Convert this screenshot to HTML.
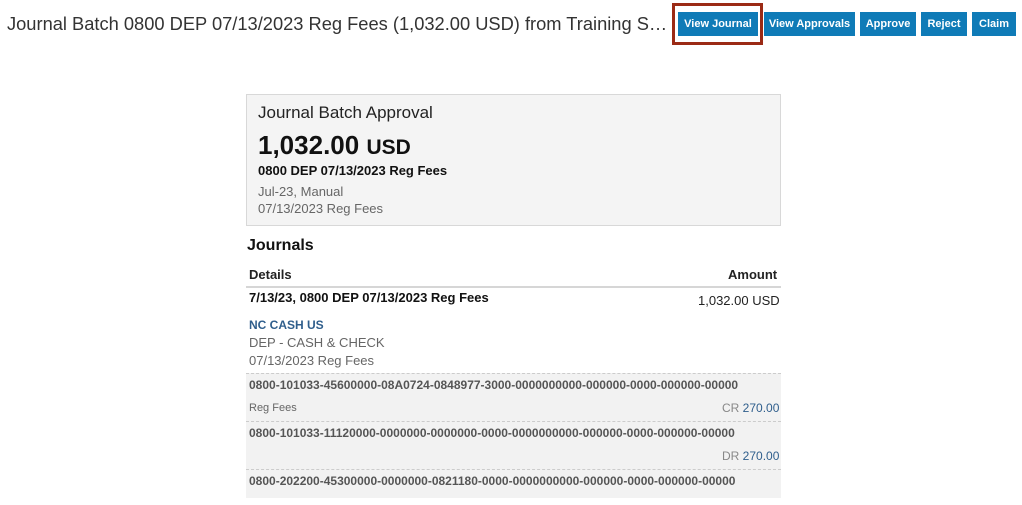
<!DOCTYPE html>
<html><head><style>
body{margin:0;width:1022px;height:505px;background:#fff;font-family:"Liberation Sans",sans-serif;position:relative;overflow:hidden}
.a{position:absolute;white-space:nowrap}
.btn{position:absolute;top:12px;height:24px;background:#0f7bb7;color:#fff;font-size:11px;font-weight:bold;line-height:24px;text-align:center}
.b{font-weight:bold}
.g{color:#666}
.acct{position:absolute;left:246px;width:535px;background:#f2f2f2;border-top:1px dashed #ccc}
</style></head><body>
<div class="a" style="left:7px;top:13px;font-size:18.3px;color:#333">Journal Batch 0800 DEP 07/13/2023 Reg Fees (1,032.00 USD) from Training S…</div>
<div class="a" style="left:672px;top:3px;width:85px;height:36px;border:3px solid #9b2a15"></div>
<div class="btn" style="left:678px;width:80px">View Journal</div>
<div class="btn" style="left:764px;width:91px">View Approvals</div>
<div class="btn" style="left:860px;width:56px">Approve</div>
<div class="btn" style="left:921px;width:46px">Reject</div>
<div class="btn" style="left:972px;width:44px">Claim</div>

<div class="a" style="left:246px;top:94px;width:533px;height:130px;background:#f4f4f4;border:1px solid #d8d8d8"></div>
<div class="a" style="left:258px;top:103px;font-size:17px;color:#222">Journal Batch Approval</div>
<div class="a b" style="left:258px;top:130px;font-size:26px;color:#111">1,032.00 <span style="font-size:21px">USD</span></div>
<div class="a b" style="left:258px;top:163px;font-size:13px;color:#111">0800 DEP 07/13/2023 Reg Fees</div>
<div class="a g" style="left:258px;top:184px;font-size:13px">Jul-23, Manual</div>
<div class="a g" style="left:258px;top:201px;font-size:13px">07/13/2023 Reg Fees</div>

<div class="a b" style="left:247px;top:237px;font-size:16px;color:#111">Journals</div>
<div class="a b" style="left:249px;top:267px;font-size:13px;color:#222">Details</div>
<div class="a b" style="left:728px;top:267px;font-size:13px;color:#222">Amount</div>
<div class="a" style="left:246px;top:286px;width:535px;height:2px;background:#d6d6d6"></div>
<div class="a b" style="left:249px;top:290px;font-size:13px;color:#111">7/13/23, 0800 DEP 07/13/2023 Reg Fees</div>
<div class="a" style="left:698px;top:293px;font-size:13px;color:#222">1,032.00 USD</div>
<div class="a b" style="left:249px;top:318px;font-size:12px;color:#2f5e8c">NC CASH US</div>
<div class="a g" style="left:249px;top:335px;font-size:13px">DEP - CASH &amp; CHECK</div>
<div class="a g" style="left:249px;top:353px;font-size:13px">07/13/2023 Reg Fees</div>

<div class="acct" style="top:373px;height:47px"></div>
<div class="acct" style="top:421px;height:47px"></div>
<div class="acct" style="top:469px;height:28px"></div>
<div class="a b" style="left:249px;top:378px;font-size:12px;color:#555">0800-101033-45600000-08A0724-0848977-3000-0000000000-000000-0000-000000-00000</div>
<div class="a g" style="left:249px;top:402px;font-size:11px">Reg Fees</div>
<div class="a" style="left:722px;top:401px;font-size:12px;color:#888">CR <span style="color:#2f5e8c">270.00</span></div>
<div class="a b" style="left:249px;top:426px;font-size:12px;color:#555">0800-101033-11120000-0000000-0000000-0000-0000000000-000000-0000-000000-00000</div>
<div class="a" style="left:722px;top:449px;font-size:12px;color:#888">DR <span style="color:#2f5e8c">270.00</span></div>
<div class="a b" style="left:249px;top:474px;font-size:12px;color:#555">0800-202200-45300000-0000000-0821180-0000-0000000000-000000-0000-000000-00000</div>
</body></html>
